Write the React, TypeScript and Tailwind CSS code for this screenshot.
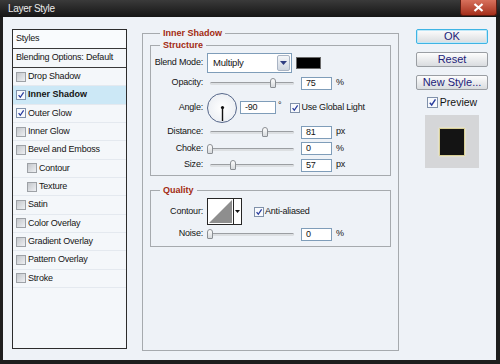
import clsx from 'clsx';

const styleItems = [
  { label: 'Drop Shadow', checked: false },
  { label: 'Inner Shadow', checked: true, active: true },
  { label: 'Outer Glow', checked: true },
  { label: 'Inner Glow', checked: false },
  { label: 'Bevel and Emboss', checked: false },
  { label: 'Contour', checked: false, indent: true },
  { label: 'Texture', checked: false, indent: true },
  { label: 'Satin', checked: false },
  { label: 'Color Overlay', checked: false },
  { label: 'Gradient Overlay', checked: false },
  { label: 'Pattern Overlay', checked: false },
  { label: 'Stroke', checked: false },
];

function CheckBox({ checked, big }: { checked: boolean; big?: boolean }) {
  return (
    <span
      className={clsx(
        'flex shrink-0 items-center justify-center border',
        big ? 'h-[11px] w-[11px]' : 'h-[10px] w-[10px]',
        checked
          ? 'border-[#8091aa] bg-[#f8fafd]'
          : 'border-[#9da1a6] bg-linear-to-br from-[#c4c7cb] to-[#eef0f3]'
      )}
    >
      {checked && (
        <svg viewBox="0 0 10 10" className="h-full w-full">
          <path d="M2 5.2 L4.1 7.8 L8.3 1.6" fill="none" stroke="#2a3d9e" strokeWidth="1.6" />
        </svg>
      )}
    </span>
  );
}

// thumb offset in px from the left of the slider box
function Slider({ at }: { at: number }) {
  return (
    <div className="relative h-[12px] w-[88px] shrink-0">
      <div className="absolute left-[3px] right-[1px] top-[5px] h-[3px] rounded-full border-t border-[#9b9ea2] bg-[#dcdfe2]" />
      <div
        className="absolute top-[1px] h-[10px] w-[6px] rounded-t-[3px] rounded-b-[1px] border border-[#8b8f94] bg-linear-to-b from-white to-[#d6d9dc]"
        style={{ left: at }}
      />
    </div>
  );
}

function Field({ value, w = 'w-[31px]' }: { value: string; w?: string }) {
  return (
    <div className={clsx('h-[13px] shrink-0 border border-[#7f9db9] bg-white pl-[4px] leading-[11px]', w)}>
      {value}
    </div>
  );
}

function Label({ children }: { children: string }) {
  return <span className="w-[53px] shrink-0 pr-[1px] text-right">{children}</span>;
}

function SliderRow({ label, at, value, unit, className }: { label: string; at: number; value: string; unit: string; className: string }) {
  return (
    <div className={clsx('flex h-[14px] items-center', className)}>
      <Label>{label}</Label>
      <span className="ml-[3px]">
        <Slider at={at} />
      </span>
      <span className="ml-[6px]">
        <Field value={value} />
      </span>
      <span className="ml-[4px]">{unit}</span>
    </div>
  );
}

function Button({ children, focused }: { children: string; focused?: boolean }) {
  return (
    <div
      className={clsx(
        'flex h-[15px] items-center justify-center rounded-[2px] border bg-linear-to-b from-[#fdfdfd] to-[#d9dcdf] text-[11px] tracking-normal text-[#22227a]',
        focused ? 'border-[#3eb4e4] shadow-[inset_0_0_0_1px_#bfe8f8]' : 'border-[#9a9ea3]'
      )}
    >
      {children}
    </div>
  );
}

export default function App() {
  return (
    <div className="flex h-[364px] w-[500px] flex-col bg-[#1d1d1d] font-['Liberation_Sans',Arial,sans-serif] text-[9px] tracking-[-0.2px] text-[#141414]">
      {/* title bar */}
      <div className="flex h-[17px] shrink-0 bg-linear-to-b from-[#3a3a3a] to-[#161616]">
        <span className="ml-[8px] self-center text-[10px] tracking-[-0.3px] text-[#ececec]">Layer Style</span>
        <div className="ml-auto mr-[3px] flex h-[16px] w-[37px] items-center justify-center rounded-b-[3px] border border-t-0 border-[#5c1c12] bg-linear-to-b from-[#d8705c] to-[#a52e1a]">
          <svg width="11" height="9" viewBox="0 0 11 9">
            <path d="M1.5 1 L9.5 8 M9.5 1 L1.5 8" stroke="white" strokeWidth="2.2" />
          </svg>
        </div>
      </div>

      <div className="mb-[4px] ml-[3px] mr-[4px] flex flex-1 items-start bg-[#eef2f7] pl-[9px] pt-[12px]">
        {/* styles list */}
        <div className="flex h-[320px] w-[115px] shrink-0 flex-col border border-[#2c2c2c] bg-[#f4f7fa]">
          <div className="flex h-[19px] items-center border-b border-[#3a3a3a] bg-[#f9fbfd] pl-[3px]">Styles</div>
          <div className="flex h-[19px] items-center border-b border-[#3a3a3a] pl-[3px]">Blending Options: Default</div>
          {styleItems.map((it) => (
            <div
              key={it.label}
              className={clsx(
                'flex h-[18.33px] items-center gap-[2px] border-b border-[#e4e9ef]',
                it.indent ? 'pl-[14px]' : 'pl-[3px]',
                it.active && 'bg-[#cce8f6] font-bold tracking-normal'
              )}
            >
              <CheckBox checked={it.checked} />
              <span>{it.label}</span>
            </div>
          ))}
        </div>

        {/* Inner Shadow group */}
        <fieldset className="-mt-[1px] ml-[15px] h-[323px] w-[257px] shrink-0 border border-[#a6aaae] px-[7px]">
          <legend className="ml-[10px] px-[3px] font-bold leading-[11px] tracking-normal text-[#a32a12]">Inner Shadow</legend>

          <fieldset className="mt-[1px] border border-[#a6aaae] pb-[3px]">
            <legend className="ml-[9px] px-[3px] font-bold leading-[11px] tracking-normal text-[#a32a12]">Structure</legend>

            <div className="mt-[2px] flex h-[20px] items-center">
              <Label>Blend Mode:</Label>
              <div className="ml-[3px] flex h-[20px] w-[85px] border border-[#7f9db9] bg-white">
                <span className="flex-1 self-center pl-[5px] text-[9.5px]">Multiply</span>
                <div className="m-[1px] flex w-[13px] items-center justify-center rounded-[2px] border border-[#a9b4c4] bg-linear-to-b from-[#f4f6f9] to-[#cfd6e0]">
                  <svg width="7" height="4" viewBox="0 0 7 4">
                    <path d="M0 0 H7 L3.5 4 Z" fill="#2f3d80" />
                  </svg>
                </div>
              </div>
              <div className="ml-[4px] h-[12px] w-[25px] border border-[#6a6a6a] bg-black" />
            </div>

            <SliderRow className="mt-[3px]" label="Opacity:" at={63} value="75" unit="%" />

            <div className="mt-[2.5px] flex h-[30px] items-center">
              <Label>Angle:</Label>
              <div className="ml-[3px] flex h-[30px] w-[30px] shrink-0 items-center justify-center rounded-full border-[1.5px] border-[#56678a] bg-radial from-white to-[#e6eaf0]">
                <svg width="27" height="27" viewBox="0 0 27 27">
                  <line x1="13.5" y1="13.5" x2="13.5" y2="27" stroke="#111" strokeWidth="1.4" />
                  <circle cx="13.5" cy="13.5" r="1.6" fill="#111" />
                </svg>
              </div>
              <span className="ml-[3px]">
                <Field value="-90" w="w-[36px]" />
              </span>
              <span className="ml-[2px] self-start pt-[6px]">°</span>
              <span className="ml-[9px] flex items-center gap-[1px]">
                <CheckBox checked />
                <span>Use Global Light</span>
              </span>
            </div>

            <SliderRow className="mt-[2.5px]" label="Distance:" at={55} value="81" unit="px" />
            <SliderRow className="mt-[2.5px]" label="Choke:" at={0} value="0" unit="%" />
            <SliderRow className="mt-[2.5px]" label="Size:" at={23} value="57" unit="px" />
          </fieldset>

          <fieldset className="mt-[8.5px] border border-[#a6aaae] pb-[4.5px]">
            <legend className="ml-[9px] px-[3px] font-bold leading-[11px] tracking-normal text-[#a32a12]">Quality</legend>

            <div className="mt-[2.5px] flex h-[27px] items-center">
              <Label>Contour:</Label>
              <div className="ml-[3px] flex h-[27px] w-[35px] border border-[#262626] bg-white">
                <svg className="flex-1" viewBox="0 0 25 25" preserveAspectRatio="none">
                  <path d="M1 24 L24 1 L24 24 Z" fill="#8e8e8e" />
                </svg>
                <div className="flex w-[8px] items-center justify-center border-l border-[#262626]">
                  <svg width="5" height="3" viewBox="0 0 5 3">
                    <path d="M0 0 H5 L2.5 3 Z" fill="#111" />
                  </svg>
                </div>
              </div>
              <span className="ml-[12px] flex items-center gap-[1px]">
                <CheckBox checked />
                <span>Anti-aliased</span>
              </span>
            </div>

            <SliderRow className="mt-[2px]" label="Noise:" at={0} value="0" unit="%" />
          </fieldset>
        </fieldset>

        {/* buttons */}
        <div className="ml-[17px] flex w-[72px] shrink-0 flex-col">
          <Button focused>OK</Button>
          <div className="mt-[8px]">
            <Button>Reset</Button>
          </div>
          <div className="mt-[8px]">
            <Button>New Style...</Button>
          </div>
          <div className="mt-[6px] flex h-[13px] items-center justify-center gap-[2px] text-[10.5px] tracking-normal">
            <CheckBox checked big />
            <span>Preview</span>
          </div>
          <div className="mx-auto mt-[6px] flex h-[53px] w-[54px] items-center justify-center bg-[#d5d6d8]">
            <div className="h-[28px] w-[26px] border border-[#d8cf95] bg-[#141414] shadow-[0_0_2px_#fff6c4]" />
          </div>
        </div>
      </div>
    </div>
  );
}
